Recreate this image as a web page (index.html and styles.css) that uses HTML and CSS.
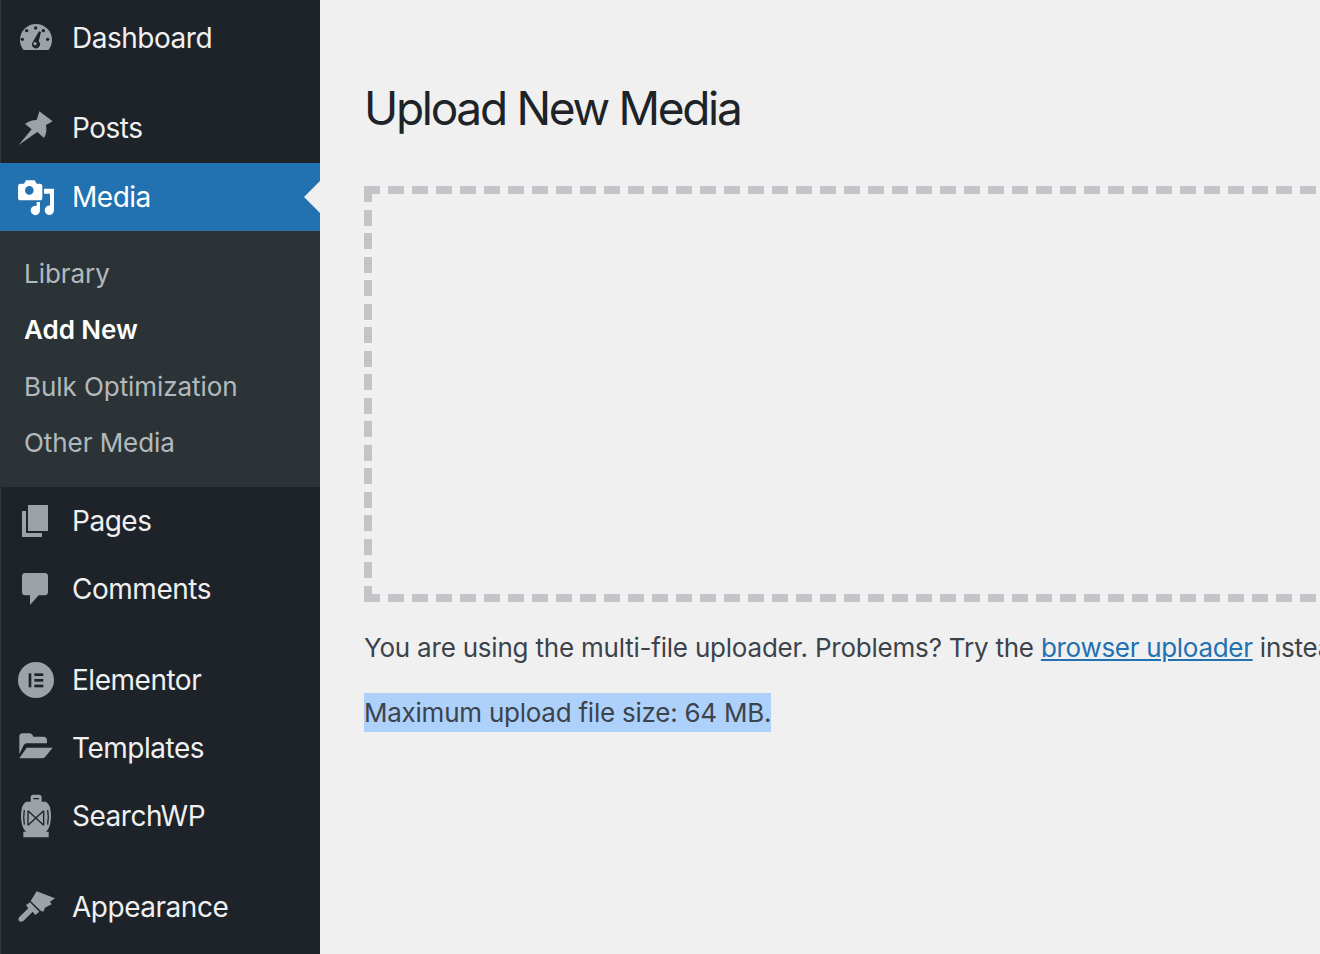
FILE: index.html
```html
<!DOCTYPE html>
<html lang="en">
<head>
<meta charset="utf-8">
<title>Upload New Media</title>
<link rel="stylesheet" href="styles.css">
</head>
<body>
<div class="layout">
  <nav class="sidebar">
    <ul class="menu">
      <li class="item"><svg class="icon" viewBox="54 60 108 108"><path d="M70.500 150A48 48 0 1 1 145.500 150Z"/><g class="cut"><circle cx="107" cy="84" r="5"/><circle cx="80" cy="92" r="5"/><circle cx="67" cy="118" r="5"/><circle cx="143" cy="118" r="5"/><circle cx="130" cy="92" r="5"/><path d="M117 94L123 96L116 124A12 12 0 1 1 97 128Z"/></g><circle cx="105" cy="131" r="5"/></svg><span>Dashboard</span></li>
    </ul>
    <ul class="menu">
      <li class="item"><svg class="icon" viewBox="54 330 108 108"><path d="M56 435L95 388L75 372Q90 360 110 360L118 334L158 364L138 375Q142 398 132 414L112 396Z"/></svg><span>Posts</span></li>
      <li class="item current"><svg class="icon" viewBox="54 537 108 108"><path fill-rule="evenodd" d="M62 551H72L78 541H104L110 551H119Q127 551 127 559V593Q127 601 119 601H62Q54 601 54 593V559Q54 551 62 551ZM88 558A13 13 0 1 0 88 584A13 13 0 1 0 88 558Z"/><path d="M132 566H162V631A14 14 0 1 1 150 617V581H132Z"/><path d="M110 606H120V631A14 14 0 1 1 110 618Z"/></svg><span>Media</span></li>
      <li>
        <ul class="submenu">
          <li class="subitem">Library</li>
          <li class="subitem active">Add New</li>
          <li class="subitem">Bulk Optimization</li>
          <li class="subitem">Other Media</li>
        </ul>
      </li>
      <li class="item"><svg class="icon" viewBox="54 39 108 108"><path d="M84 45H144V123H84Z"/><path d="M66 63H78V129H126V141H66Z"/></svg><span>Pages</span></li>
      <li class="item"><svg class="icon" viewBox="54 243 108 108"><path d="M76 249H134Q144 249 144 259V306Q144 316 134 316H116L90 345V316H76Q66 316 66 306V259Q66 249 76 249Z"/></svg><span>Comments</span></li>
    </ul>
    <ul class="menu">
      <li class="item"><svg class="icon" viewBox="54 516 108 108"><circle cx="108" cy="570" r="54"/><g class="cut"><path d="M86 550H94V592H86Z"/><path d="M103 550H130V558H103Z"/><path d="M103 567H130V575H103Z"/><path d="M103 584H130V592H103Z"/></g></svg><span>Elementor</span></li>
      <li class="item"><svg class="icon" viewBox="54 30 108 108"><path d="M58 102V50Q58 40 68 40H88Q96 40 100 50H130Q140 50 141 60V70H80Q74 70 71 76Z"/><path d="M58 115L80 83H158L136 110Q132 115 126 115Z"/></svg><span>Templates</span></li>
      <li class="item"><svg class="icon" viewBox="54 234 108 108"><path d="M92 245V232Q92 224 100 224H117Q125 224 125 232V245H138Q146 250 150 262Q156 290 150 314Q146 328 138 335H146V352H70V335H78Q70 328 66 314Q60 290 66 262Q70 250 78 245Z"/><g class="line"><path d="M84 272V316M131 272V316M84 272L131 316M131 272L84 316M100 236H117M73 270Q69 292 73 314M143 270Q147 292 143 314"/></g></svg><span>SearchWP</span></li>
    </ul>
    <ul class="menu">
      <li class="item"><svg class="icon" viewBox="54 507 108 108"><path d="M92 543L110 514L165 535L150 545L155 553L135 563L130 575L122 572Z"/><path d="M78 555L90 547L118 575L106 585L98 575L70 603Q62 608 57 603Q52 597 58 591L85 565Z"/></svg><span>Appearance</span></li>
    </ul>
  </nav>
  <main class="content">
    <h1 class="title">Upload New Media</h1>
    <div class="dropzone"></div>
    <p class="note">You are using the multi-file uploader. Problems? Try the <a class="link" href="#">browser uploader</a> instead.</p>
    <p class="note size"><span class="selected">Maximum upload file size: 64 MB.</span></p>
  </main>
</div>
</body>
</html>
```
FILE: styles.css
```css
* { box-sizing: border-box; }
html, body { margin: 0; height: 100%; overflow: hidden; }
body { background: #f0f0f1; font-family: Inter, "Noto Sans", sans-serif; color: #3c434a; }
ul { list-style: none; margin: 0; padding: 0; }

.layout { display: flex; height: 954px; overflow: hidden; }

.sidebar {
  flex: 0 0 320px;
  background: #1d2329;
  padding-top: 4px;
  display: flex;
  flex-direction: column;
  gap: 22px;
  overflow: hidden;
  box-shadow: inset 1px 0 0 #33393d;
}
.menu:nth-child(n+3) { margin-top: 1px; }

.item {
  position: relative;
  display: flex;
  align-items: center;
  height: 68px;
  padding-left: 18px;
  gap: 18px;
  font-size: 28px;
  letter-spacing: -.48px;
  color: #f0f0f1;
}
.icon { flex: none; width: 36px; height: 36px; fill: #9ca2a7; overflow: visible; }
.icon .cut { fill: #1d2329; }
.icon .line { fill: none; stroke: #1d2329; stroke-width: 4; }

.current { background: #2271b1; color: #fff; margin-top: 1px; }
.current .icon { fill: #fff; }
.current::after {
  content: "";
  position: absolute;
  right: 0;
  top: 18px;
  border: 16px solid transparent;
  border-left-width: 0;
  border-right-color: #f0f0f1;
}

.submenu { background: #2c3336; height: 256px; padding-top: 14.700px; }
.subitem {
  display: flex;
  align-items: center;
  height: 56.200px;
  padding-left: 24px;
  font-size: 26px;
  letter-spacing: -.06px;
  color: rgba(240, 246, 252, .7);
}
.subitem.active { color: #fff; font-weight: 600; }

.content { flex: 1; min-width: 0; padding: 80px 0 0 44px; overflow: hidden; }
.title { margin: 0; font-size: 46px; font-weight: 400; line-height: 56px; letter-spacing: -2.300px; color: #1d2327; white-space: nowrap; }
.dropzone {
  width: 1100px;
  height: 416px;
  margin-top: 50px;
  background:
    repeating-linear-gradient(90deg, #c3c4c7 0 16px, transparent 16px 24px) left top / 100% 8px no-repeat,
    repeating-linear-gradient(90deg, #c3c4c7 0 16px, transparent 16px 24px) left bottom / 100% 8px no-repeat,
    repeating-linear-gradient(180deg, #c3c4c7 0 16px, transparent 16px 23.530px) left top / 8px 100% no-repeat;
}
.note { margin: 26px 0 0; font-size: 26px; line-height: 39px; white-space: nowrap; letter-spacing: -.21px; }
.size { margin-top: 26px; letter-spacing: -.24px; }
.link { color: #2271b1; text-decoration: underline; letter-spacing: -.3px; }
.selected { display: inline-block; background: #aed1fb; }
```
